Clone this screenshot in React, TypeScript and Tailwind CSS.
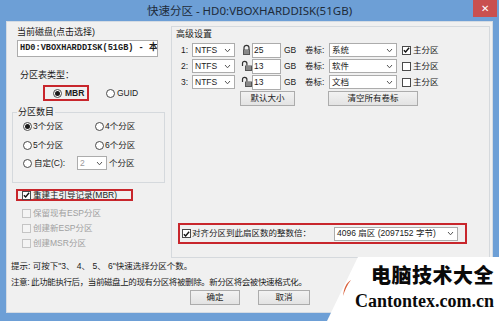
import React from 'react'

const ui = "font-['Liberation_Sans','Noto_Sans_CJK_SC',sans-serif]"

function Radio({ checked = false }: { checked?: boolean }) {
  return (
    <span className="flex h-[9px] w-[9px] shrink-0 items-center justify-center rounded-full border border-[#4a4a4a] bg-white">
      {checked && <span className="h-[5px] w-[5px] rounded-full bg-[#1a1a1a]" />}
    </span>
  )
}

function Check({ checked = false, disabled = false }: { checked?: boolean; disabled?: boolean }) {
  return (
    <span
      className={`flex h-[9px] w-[9px] shrink-0 items-center justify-center border ${
        disabled ? 'border-[#c4c4c4] bg-[#f4f4f4]' : 'border-[#4a4a4a] bg-white'
      }`}
    >
      {checked && (
        <svg width="8" height="8" viewBox="0 0 8 8">
          <path d="M1 4.2 L3 6.2 L7 1.5" fill="none" stroke="#111" strokeWidth="1.6" />
        </svg>
      )}
    </span>
  )
}

function Chevron() {
  return (
    <svg width="7" height="5" viewBox="0 0 7 5" className="shrink-0">
      <path d="M1 1 L3.5 3.8 L6 1" fill="none" stroke="#555" strokeWidth="1" />
    </svg>
  )
}

function Select({ value, w, muted = false }: { value: string; w: string; muted?: boolean }) {
  return (
    <div className={`flex h-[14px] ${w} items-center justify-between border border-[#acacac] bg-white pl-[2px] pr-[3px]`}>
      <span className={muted ? 'text-[#9a9a9a]' : ''}>{value}</span>
      <Chevron />
    </div>
  )
}

function Lock({ open = false }: { open?: boolean }) {
  return (
    <svg width="11" height="12" viewBox="0 0 11 12" className="shrink-0">
      {open ? (
        <path d="M1.5 6 V3.5 A2.2 2.2 0 0 1 5.9 3.5 V5.5" fill="none" stroke="#333" strokeWidth="1.2" />
      ) : (
        <path d="M3 6 V3.8 A2.5 2.5 0 0 1 8 3.8 V6" fill="none" stroke="#333" strokeWidth="1.2" />
      )}
      <rect x={open ? 4 : 2} y="5.5" width="7" height="5.5" fill="#555" />
      <rect x={open ? 5 : 3} y="6.5" width="5" height="1" fill="#bbb" />
      <rect x={open ? 5 : 3} y="8.5" width="5" height="1" fill="#bbb" />
    </svg>
  )
}

function Button({ label, w }: { label: string; w: string }) {
  return (
    <div className={`flex h-[15px] ${w} items-center justify-center border border-[#acacac] bg-gradient-to-b from-[#f2f2f2] to-[#e3e3e3]`}>
      {label}
    </div>
  )
}

const rows = [
  { n: '1:', size: '25', label: '系统', primary: true, open: false },
  { n: '2:', size: '13', label: '软件', primary: false, open: true },
  { n: '3:', size: '13', label: '文档', primary: false, open: true },
]

export default function App() {
  return (
    <div className={`relative flex h-[321px] w-[499px] flex-col overflow-hidden bg-[#6d9fd6] text-[8.5px] leading-none text-[#1b1b1b] ${ui}`}>
      {/* Titelleiste */}
      <div className="grid h-[21px] shrink-0 grid-cols-[1fr_auto_1fr] items-start">
        <div />
        <div className="pt-[4px] font-['Noto_Sans','Noto_Sans_CJK_SC',sans-serif] text-[11.5px] leading-[13px] text-[#1d2b3a]">
          快速分区 - HD0:VBOXHARDDISK(51GB)
        </div>
        <div className="flex justify-end pr-[2px]">
          <div className="flex h-[17px] w-[24px] items-center justify-center bg-[#c9504f] text-[10px] text-white">✕</div>
        </div>
      </div>

      {/* Client-Bereich */}
      <div className="mx-[6px] mb-[8px] flex flex-1 flex-col border border-[#d4dbe3] bg-[#f0f0f0]">
        <div className="flex">
          {/* linke Spalte */}
          <div className="ml-[5px] flex w-[154px] flex-col">
            <div className="ml-[5px] mt-[5px] h-[11px] text-[9px] leading-[11px]">当前磁盘(点击选择)</div>
            <div className="ml-[5px] mt-[2px] flex h-[17px] w-[141px] items-center overflow-hidden whitespace-nowrap border border-[#acacac] bg-white pl-[2px] font-['Liberation_Mono','Noto_Sans_CJK_SC',monospace] text-[8.6px] font-bold">
              HD0:VBOXHARDDISK(51GB) - 本
            </div>
            <div className="ml-[8px] mt-[13px] h-[11px] text-[9px] leading-[11px]">分区表类型：</div>
            <div className="mt-[4px] flex h-[16px] items-center">
              <div className="ml-[31px] flex h-[16px] w-[46px] items-center gap-[3px] border-2 border-[#c8262c] pl-[8px]">
                <Radio checked />
                <span className="font-bold">MBR</span>
              </div>
              <div className="ml-[17px] flex items-center gap-[2px]">
                <Radio />
                <span>GUID</span>
              </div>
            </div>
            <fieldset className="mt-[6px] h-[76px] w-[153px] border border-[#d5d9dd] px-[10px]">
              <legend className="ml-[-6px] px-[1px] text-[9px] leading-[11px]">分区数目</legend>
              <div className="mt-[4px] grid grid-cols-[72px_1fr] gap-y-[10px]">
                <div className="flex items-center gap-[1px]"><Radio checked />3个分区</div>
                <div className="flex items-center gap-[1px]"><Radio />4个分区</div>
                <div className="flex items-center gap-[1px]"><Radio />5个分区</div>
                <div className="flex items-center gap-[1px]"><Radio />6个分区</div>
              </div>
              <div className="mt-[6px] flex items-center">
                <Radio />
                <span className="ml-[2px] w-[43px]">自定(C):</span>
                <Select value="2" w="w-[30px]" muted />
                <span className="ml-[2px]">个分区</span>
              </div>
            </fieldset>
            <div className="ml-[4px] mt-[6px] flex h-[12px] w-[117px] items-center gap-[2px] border-2 border-[#c8262c] pl-[4px]">
              <Check checked />
              <span>重建主引导记录(MBR)</span>
            </div>
            <div className="mt-[5px] flex flex-col text-[#a0a0a0]">
              {['保留现有ESP分区', '创建新ESP分区', '创建MSR分区'].map((t) => (
                <div key={t} className="ml-[10px] flex h-[15px] items-center gap-[2px]">
                  <Check disabled />
                  <span>{t}</span>
                </div>
              ))}
            </div>
          </div>

          {/* rechte Gruppe */}
          <div className="ml-[5px] mt-[4px] flex h-[232px] w-[319px] flex-col border border-[#d5d9dd]">
            <div className="ml-[4px] mt-[2px] h-[11px] text-[9px] leading-[11px]">高级设置</div>
            <div className="mt-[2px] flex flex-col">
              {rows.map((r) => (
                <div key={r.n} className="flex h-[16px] items-center">
                  <span className="ml-[9px] w-[11px]">{r.n}</span>
                  <Select value="NTFS" w="w-[43px]" />
                  <span className="ml-[6px]"><Lock open={r.open} /></span>
                  <div className="flex h-[15px] w-[29px] items-center border border-[#acacac] bg-white pl-[1px]">{r.size}</div>
                  <span className="ml-[3px] w-[21px]">GB</span>
                  <span className="w-[24px]">卷标:</span>
                  <Select value={r.label} w="w-[68px]" />
                  <span className="ml-[5px]"><Check checked={r.primary} /></span>
                  <span className="ml-[2px]">主分区</span>
                </div>
              ))}
            </div>
            <div className="mt-[1px] flex">
              <div className="ml-[68px]"><Button label="默认大小" w="w-[55px]" /></div>
              <div className="ml-[33px]"><Button label="清空所有卷标" w="w-[90px]" /></div>
            </div>
            <div className="flex-1" />
            <div className="mb-[13px] ml-[6px] flex h-[21px] w-[289px] items-center border-2 border-[#c8262c] pl-[2px]">
              <Check checked />
              <span className="ml-[1px]">对齐分区到此扇区数的整数倍：</span>
              <div className="ml-[23px]">
                <Select value="4096 扇区 (2097152 字节)" w="w-[124px]" />
              </div>
            </div>
          </div>
        </div>

        {/* Hinweise */}
        <div className="ml-[4px] mt-[4px] flex flex-col gap-[7px]">
          <div>提示: 可按下"3、 4、 5、 6"快速选择分区个数。</div>
          <div className="tracking-[-0.4px]">注意: 此功能执行后，当前磁盘上的现有分区将被删除。新分区将会被快速格式化。</div>
        </div>
        <div className="mt-[4px] flex">
          <div className="ml-[183px]"><Button label="确定" w="w-[50px]" /></div>
          <div className="ml-[18px]"><Button label="取消" w="w-[52px]" /></div>
        </div>
      </div>

      {/* Wasserzeichen */}
      <div className="absolute left-[327px] top-[257px] flex h-[64px] w-[172px] flex-col items-end bg-white pr-[5px] [clip-path:polygon(18%_0,100%_0,100%_100%,0_100%)]">
        <svg width="10" height="18" viewBox="0 0 10 18" className="absolute left-[15px] top-[22px]">
          <path d="M9 1 C4 4 2 9 1 17 C3 11 5 6 9 1 Z" fill="#d9603b" />
        </svg>
        <div className="mt-[6px] font-['Noto_Sans_CJK_SC',sans-serif] text-[20px] font-black leading-[24px] tracking-[0.5px] text-[#0a0a0a]">电脑技术大全</div>
        <div className="mt-[3px] font-['Liberation_Serif',serif] text-[18px] font-bold leading-[22px] text-[#0a0a0a]">Cantontex.com.cn</div>
      </div>
    </div>
  )
}
